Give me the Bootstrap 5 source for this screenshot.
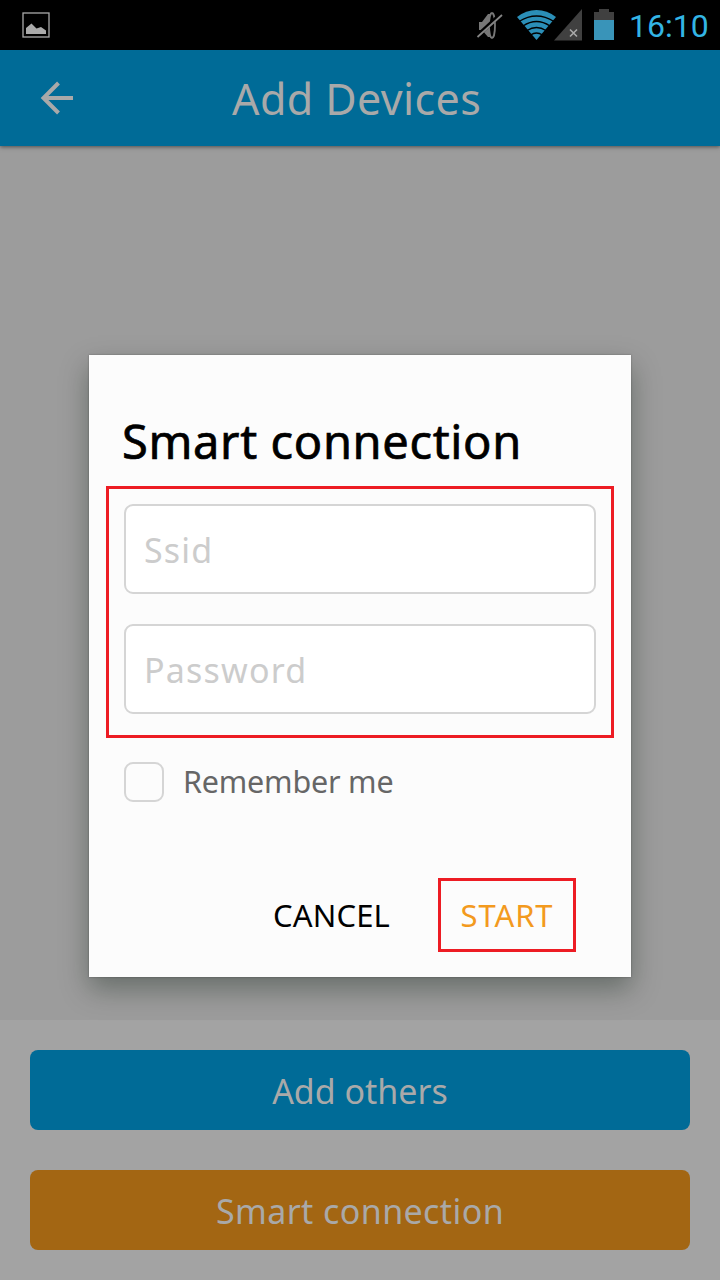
<!DOCTYPE html>
<html lang="en">
<head>
<meta charset="utf-8">
<meta name="viewport" content="width=device-width, initial-scale=1">
<title>Add Devices</title>
<link href="https://cdn.jsdelivr.net/npm/bootstrap@5.3.0/dist/css/bootstrap.min.css" rel="stylesheet">
<style>
  body { font-family: "Noto Sans", "Open Sans", sans-serif; background: #9c9c9c; width: 720px; height: 1280px; overflow: hidden; }
  .status-bar { height: 50px; background: #000; }
  .status-bar svg, .app-header svg { display: block; flex: none; }
  .clock { font: 400 32px/52px Roboto, sans-serif; color: #33b5e5; letter-spacing: 0; padding-left: 1px; }
  .app-header { height: 96px; background: #006b97; box-shadow: 0 1px 4px rgba(0,0,0,.5); color: #a9a9a9; z-index: 1; }
  .app-header h1 { font-size: 43px; line-height: 97px; letter-spacing: .4px; }
  .actions { height: 260px; padding: 30px; gap: 40px; background: #a3a3a3; }
  .action-btn { height: 80px; border: 0; border-radius: 8px; font-size: 34px; line-height: 82px; padding: 0; color: #a9a9a9; }
  .action-blue { background: #006b97; }
  .action-orange { background: #a36613; letter-spacing: .4px; }
  .dialog-box { left: 89px; top: 355px; width: 542px; height: 622px; background: #fcfcfc; z-index: 2; padding: 0 17px;
    box-shadow: 0 0 2px rgba(0,0,0,.3), 0 12px 26px rgba(0,20,10,.34); }
  .dialog-box h2 { font-size: 47px; line-height: 60px; margin: 56px 0 15px 16px; font-weight: 400; -webkit-text-stroke: .7px #000; letter-spacing: .65px; color: #000; white-space: nowrap; }
  .marked { border: 3px solid #ed1c24; }
  .field-group { height: 252px; padding: 15px; gap: 30px; }
  .field { height: 90px; border: 2px solid #d5d5d5; border-radius: 9px; font-size: 34px; padding: 2px 18px 0; letter-spacing: 1.2px; background: #fff; }
  .field::placeholder { color: #ccc; opacity: 1; }
  .remember { margin: 24px 0 0 18px; gap: 19px; height: 40px; }
  .remember .form-check-input { width: 40px; height: 40px; margin: 0; border: 2px solid #d5d5d5; border-radius: 9px; background-color: #fcfcfc; }
  .remember label { font-size: 30.5px; line-height: 38px; padding-bottom: 2px; letter-spacing: -.2px; color: #666; }
  .dialog-actions { margin-top: 76px; padding-right: 38px; }
  .dlg-btn { height: 74px; font-size: 31px; line-height: 68px; padding: 0; border-radius: 0; }
  .cancel-btn { color: #000; width: 118px; margin-right: 48px; letter-spacing: .15px; }
  .start-btn { color: #f39a1e; width: 138px; letter-spacing: .9px; }
</style>
</head>
<body class="d-flex flex-column position-relative">
  <div class="status-bar d-flex align-items-start">
    <svg width="460" height="50" viewBox="0 0 460 50"><rect x="23" y="13" width="26" height="24" fill="none" stroke="#aaa" stroke-width="1.3"/><path d="M26 34v-6l5.500-4.500 5 5 4.500-1.500 5 3.500V34Z" fill="#aaa"/></svg>
    <svg width="168" height="50" viewBox="460 0 168 50">
      <path d="M479 22h3l6-8v23l-6-7h-3Z" fill="#777"/>
      <ellipse cx="492" cy="25.500" rx="3" ry="12.500" fill="none" stroke="#777" stroke-width="1.800"/>
      <path d="M489 14v23" stroke="#777" stroke-width="2"/>
      <path d="M476 37 501 14" stroke="#000" stroke-width="4"/><path d="M477.500 37 502 15" stroke="#858585" stroke-width="1.800"/>
      <path d="M536.500 40 517 17Q526 10 536.500 10T556 17Z" fill="#2b8fb8"/>
      <path d="M519 21.500q17.500-11 35 0M523 26q13.500-9 27 0M527 30.500q9.500-6 19 0M530.500 35q6-4 12 0" fill="none" stroke="#000" stroke-width="1.300"/>
      <path d="M554 40.500 582 9v31.500Z" fill="#404040"/><path d="m570 29.500 7 7m0-7-7 7" stroke="#aaa" stroke-width="1.600"/>
      <path d="M594 12h5V9h10v3h5v8h-20Z" fill="#404040"/><path d="M594 20h20v20h-20Z" fill="#3994b9"/>
    </svg>
    <span class="clock">16:10</span>
  </div>
  <header class="app-header d-flex position-relative">
    <svg width="232" height="96" viewBox="0 50 232 96"><path d="M73 98H43M58.500 83 43.500 98l15 15" fill="none" stroke="#a9a9a9" stroke-width="4"/></svg>
    <h1 class="m-0 fw-normal">Add Devices</h1>
  </header>
  <main class="flex-grow-1"></main>
  <footer class="actions d-flex flex-column">
    <button class="btn action-btn action-blue w-100">Add others</button>
    <button class="btn action-btn action-orange w-100">Smart connection</button>
  </footer>
  <section class="dialog-box position-absolute" role="dialog">
    <div class="overflow-hidden"><h2>Smart connection</h2></div>
    <div class="field-group marked d-flex flex-column">
      <input class="form-control field" type="text" placeholder="Ssid">
      <input class="form-control field" type="password" placeholder="Password">
    </div>
    <div class="remember d-flex align-items-center">
      <input class="form-check-input" type="checkbox" id="remember"><label for="remember">Remember me</label>
    </div>
    <div class="dialog-actions d-flex justify-content-end">
      <button class="btn dlg-btn cancel-btn">CANCEL</button>
      <button class="btn dlg-btn start-btn marked">START</button>
    </div>
  </section>
<script src="https://cdn.jsdelivr.net/npm/bootstrap@5.3.0/dist/js/bootstrap.bundle.min.js"></script>
</body>
</html>
